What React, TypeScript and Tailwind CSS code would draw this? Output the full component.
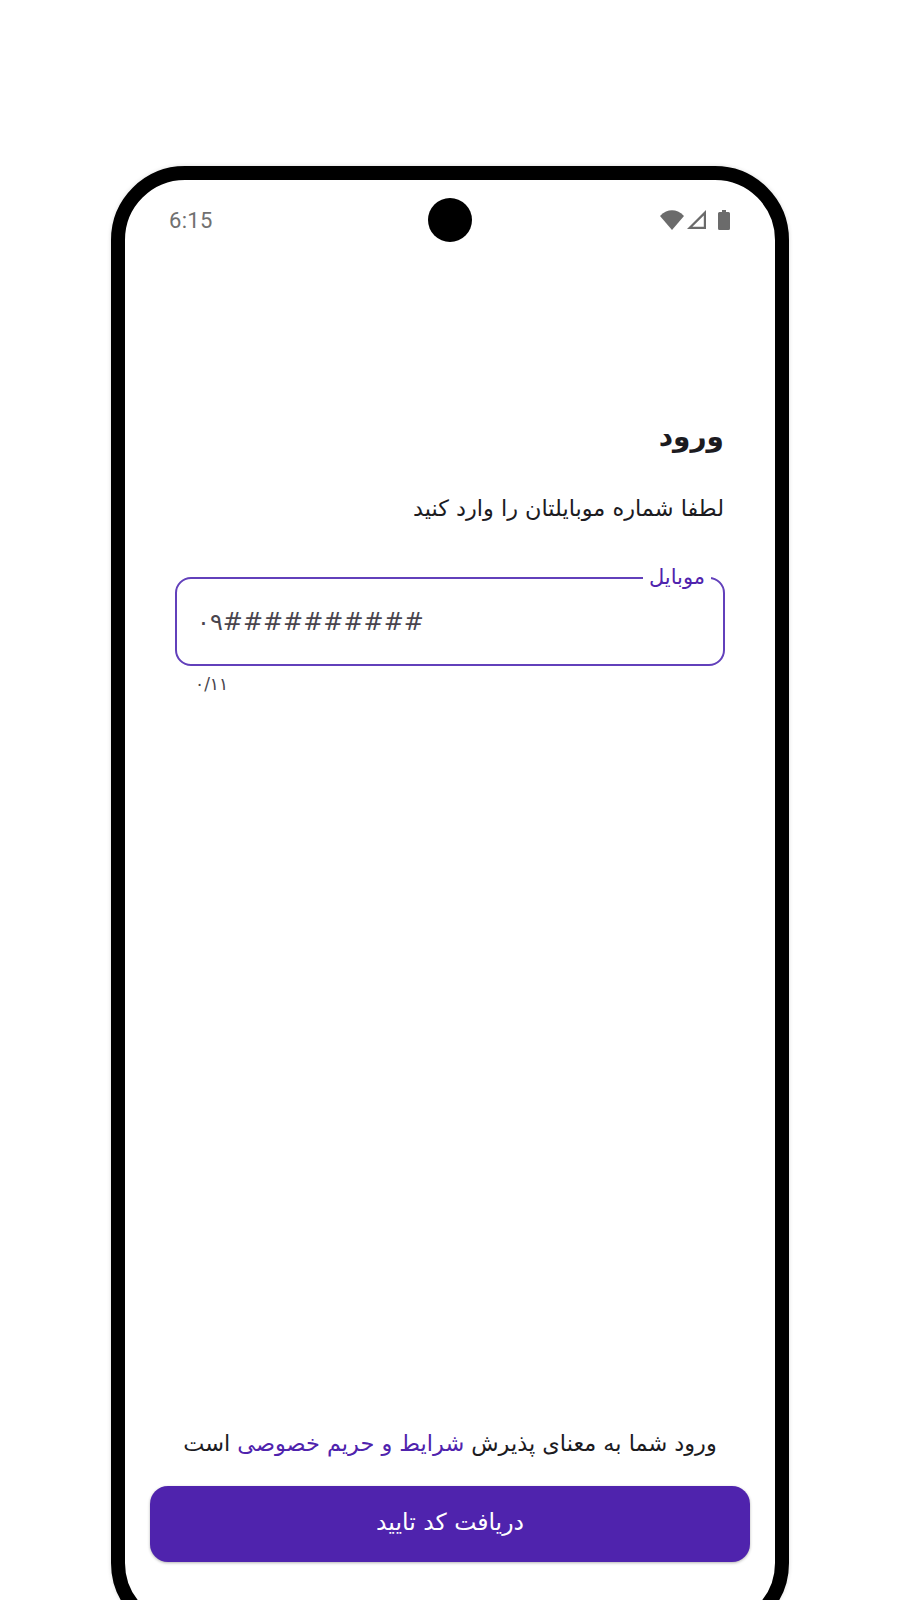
export default function App() {
  const fa = "font-['DejaVu_Sans',sans-serif]";
  return (
    <div className="h-[1600px] w-[900px] overflow-hidden bg-white pt-[166px] pl-[111px]">
      <div className="flex h-[1471px] w-[678px] flex-col rounded-[74px] border-[14px] border-black bg-white shadow-[0_0_4px_rgba(0,0,0,0.15)]">
        <div className="relative flex h-[78px] items-center justify-between pl-[44px] pr-[45px] pt-[2px]">
          <span className="pt-[1px] font-['Roboto',sans-serif] text-[22px] leading-none tracking-[0.3px] text-[#707070]">6:15</span>
          <div className="absolute left-[303px] top-[18px] h-[44px] w-[44px] rounded-full bg-black" />
          <div className="-mt-[1px] flex items-center">
            <svg width="24" height="20" viewBox="0 0 24 20" className="mr-[3px]">
              <path d="M0 6 C4 2 8 0.3 12 0.3 C16 0.3 20 2 24 6 L12 20 Z" fill="#6b6b6b" />
            </svg>
            <svg width="19" height="19" viewBox="0 0 19 19" className="mr-[12px]">
              <path d="M19 0 L19 19 L0 19 Z M16.8 5.4 L5.4 16.8 L16.8 16.8 Z" fill="#6b6b6b" fillRule="evenodd" />
            </svg>
            <svg width="12" height="20" viewBox="0 0 12 20">
              <path d="M4 0 H8 V2 H10.5 A1.5 1.5 0 0 1 12 3.5 V18.5 A1.5 1.5 0 0 1 10.5 20 H1.5 A1.5 1.5 0 0 1 0 18.5 V3.5 A1.5 1.5 0 0 1 1.5 2 H4 Z" fill="#6b6b6b" />
            </svg>
          </div>
        </div>

        <div dir="rtl" className={`flex flex-1 flex-col pl-[51px] pr-[51px] ${fa}`}>
          <h1 className="mt-[156px] text-[28px] font-bold leading-[46px] text-[#1c1b1f]">ورود</h1>
          <p className="mt-[32px] text-[22.4px] leading-[32px] text-[#1c1b1f]">لطفا شماره موبایلتان را وارد کنید</p>

          <div className="relative -mx-[1px] mt-[53px] h-[89px] rounded-[16px] border-2 border-[#6240bb]">
            <span className="absolute -top-[15px] right-[12px] bg-white px-[6px] text-[21px] leading-[26px] text-[#4f23ad]">موبایل</span>
            <div dir="ltr" className="flex h-full items-center pl-[20px] text-[24px] tracking-[1px] text-[#49454e]">۰۹##########</div>
          </div>
          <div dir="ltr" className="mt-[8px] pl-[19px] text-[17px] leading-[20px] text-[#49454e]">۰/۱۱</div>

          <p className="mt-auto text-center text-[22.4px] leading-[32px] text-[#1c1b1f]">
            ورود شما به معنای پذیرش <span className="text-[#4f23ad]">شرایط و حریم خصوصی</span> است
          </p>
        </div>

        <div dir="rtl" className={`mb-[61px] mt-[27px] px-[25px] ${fa}`}>
          <button className="flex h-[76px] w-full items-center justify-center rounded-[18px] bg-[#4f23ad] pb-[3px] text-[23.5px] text-white shadow-[0_1px_3px_rgba(0,0,0,0.3)]">دریافت کد تایید</button>
        </div>
      </div>
    </div>
  );
}
